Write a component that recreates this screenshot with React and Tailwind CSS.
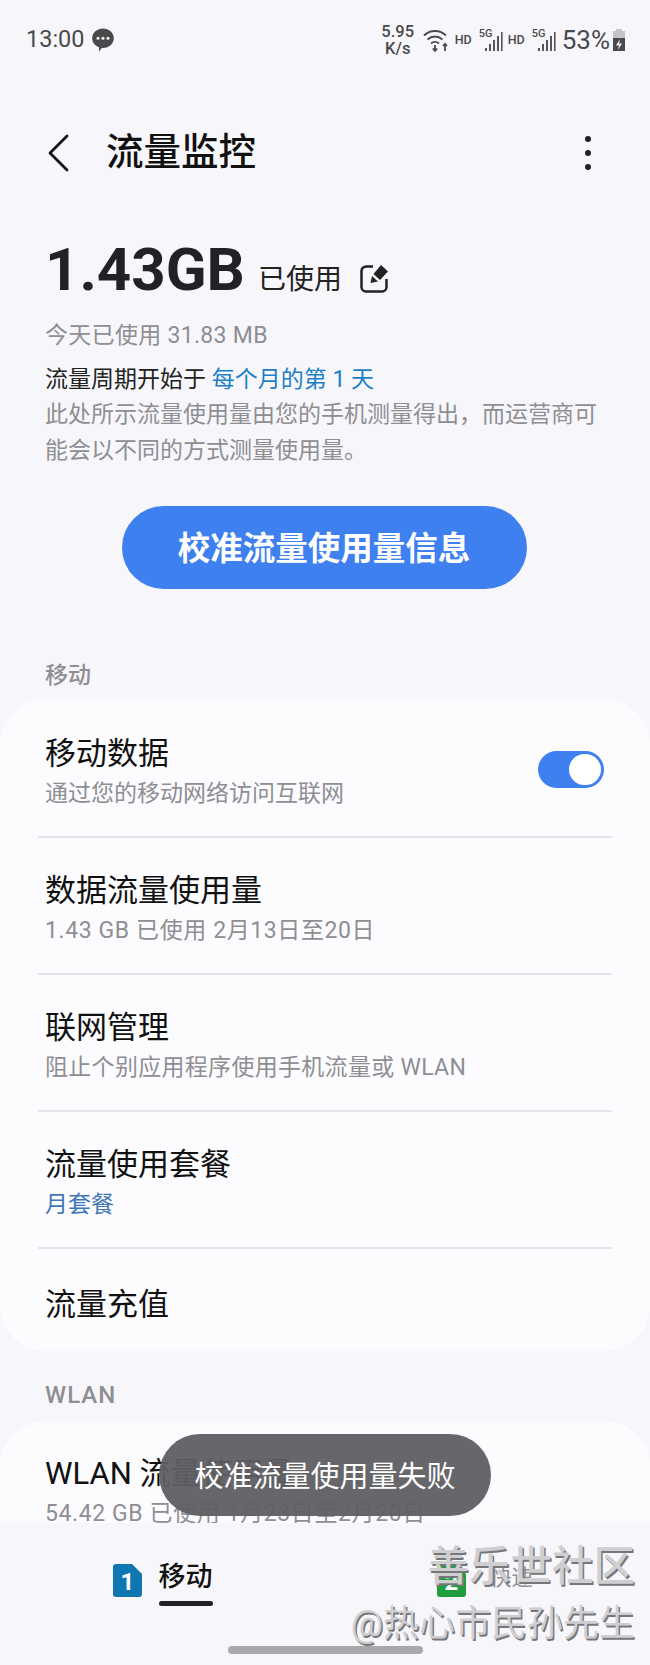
const font = { fontFamily: 'Roboto, "Noto Sans CJK SC", sans-serif' }

function Signal() {
    return (
        <span className="relative w-[23px] h-[24px] block">
            <span className="absolute left-0 top-0 text-[11px] leading-[11px] font-medium text-[#4a4a4c]">5G</span>
            <svg className="absolute left-[6px] top-[4px]" width="18" height="20" viewBox="0 0 18 20" fill="#55555a">
                <rect x="0" y="16" width="2" height="3" />
                <rect x="4" y="12" width="2" height="7" />
                <rect x="8" y="8" width="2" height="11" />
                <rect x="12" y="4" width="2" height="15" />
                <rect x="16" y="0" width="1.6" height="19" />
            </svg>
        </span>
    )
}

function StatusBar() {
    return (
        <div className="flex flex-row items-center justify-between h-[80px] pl-[26px] pr-[24px] text-[#4a4a4c]">
            <div className="flex flex-row items-center gap-[6px]">
                <span className="text-[23.500px] leading-none">13:00</span>
                <svg width="24" height="26" viewBox="0 0 24 26">
                    <path d="M12 1.5c6 0 10.8 4.3 10.8 9.8 0 5.4-4.8 9.7-10.8 9.7-.4 0-.8 0-1.2-.1L8 24.5v-4.2C3.800 18.800 1.200 15.400 1.200 11.300 1.200 5.800 6 1.500 12 1.500z" fill="#4a4a4c" />
                    <circle cx="7" cy="11.300" r="1.500" fill="#f7f7fb" />
                    <circle cx="12" cy="11.300" r="1.500" fill="#f7f7fb" />
                    <circle cx="17" cy="11.300" r="1.500" fill="#f7f7fb" />
                </svg>
            </div>
            <div className="flex flex-row items-center">
                <span className="flex flex-col items-center text-[16.500px] leading-[17px] font-medium w-[36px] mr-[7px]">
                    <span>5.95</span>
                    <span>K/s</span>
                </span>
                <svg width="27" height="26" viewBox="0 0 27 26" fill="none" stroke="#4a4a4c" strokeWidth="1.800" className="mr-[5px]">
                    <path d="M1 8.500C7 2.500 17 2.500 23 8.500" />
                    <path d="M4.500 12.500C9 8.500 15 8.500 19.500 12.500" />
                    <path d="M8 16.500C10.500 14.500 13.500 14.500 16 16.500" />
                    <path d="M12 18v6M9.800 21.500l2.200 2.500 2.200-2.500" />
                    <path d="M22 24v-7M20 19l2-2.200 2 2.200" />
                </svg>
                <span className="text-[12.500px] leading-none font-medium w-[16px] mr-[8px]">HD</span>
                <Signal />
                <span className="text-[12.500px] leading-none font-medium w-[16px] ml-[6px] mr-[8px]">HD</span>
                <Signal />
                <span className="text-[26px] leading-none ml-[7px]">53%</span>
                <svg width="14" height="24" viewBox="0 0 14 24" className="ml-[2px]">
                    <path d="M4 1h6v2h3v20H1V3h3z" fill="#c4c4c6" />
                    <path d="M1 10h12v13H1z" fill="#4a4a4c" />
                    <path d="M8 11l-4 6.500h3L6 22l4-6.500H7z" fill="#f7f7fb" />
                </svg>
            </div>
        </div>
    )
}

function Row({ title, sub, subClass = "text-[#8e8e93]", last = false, children }) {
    return (
        <div className={`mx-[38px] ${last ? "" : "border-b-2 border-[#e4e4e9]"}`}>
            <div className={`px-[7px] flex flex-row items-center justify-between ${sub ? "h-[135px] pt-[6px]" : "h-[112px]"}`}>
                <div className="flex flex-col">
                    <span className="text-[31px] leading-[40px] text-[#111]">{title}</span>
                    {sub ? <span className={`text-[23px] leading-[30px] mt-[5px] ${subClass}`}>{sub}</span> : ""}
                </div>
                {children}
            </div>
        </div>
    )
}

function Sim({ n, color }) {
    return (
        <svg width="29" height="33" viewBox="0 0 29 33" className="mt-[5px]">
            <path d="M3 0h16l10 10v20a3 3 0 0 1-3 3H3a3 3 0 0 1-3-3V3a3 3 0 0 1 3-3z" fill={color} />
            <text x="14.500" y="26" textAnchor="middle" fontSize="24" fontWeight="700" fill="#fff" fontFamily="Roboto, sans-serif">{n}</text>
        </svg>
    )
}

export default function App() {
    return (
        <div style={font} className="relative flex flex-col w-[650px] h-[1665px] overflow-hidden bg-[#f7f7fb]">
            <StatusBar />

            <div className="flex-1 min-h-0 overflow-hidden flex flex-col">
                <div className="flex flex-row items-center justify-between h-[64px] mt-[53px] pl-[46px] pr-[59px]">
                    <div className="flex flex-row items-center">
                        <svg width="26" height="40" viewBox="0 0 26 40" fill="none" stroke="#111" strokeWidth="2.800" strokeLinecap="round" strokeLinejoin="round">
                            <path d="M21 3L4 20l17 17" />
                        </svg>
                        <span className="ml-[34px] text-[37.500px] leading-none font-medium text-[#111]">流量监控</span>
                    </div>
                    <div className="flex flex-col gap-[8px]">
                        <span className="w-[6px] h-[6px] rounded-full bg-[#222]"></span>
                        <span className="w-[6px] h-[6px] rounded-full bg-[#222]"></span>
                        <span className="w-[6px] h-[6px] rounded-full bg-[#222]"></span>
                    </div>
                </div>

                <div className="px-[45px] mt-[62px]">
                    <div className="flex flex-row items-end h-[70px]">
                        <span className="text-[60px] leading-[70px] font-bold text-[#222226]">1.43GB</span>
                        <span className="ml-[13px] mb-[5px] text-[28px] leading-[40px] text-[#222]">已使用</span>
                        <svg className="ml-[18px] mb-[12px]" width="28" height="28" viewBox="0 0 28 28" fill="none">
                            <path d="M13 1.500H6a4.500 4.500 0 0 0-4.500 4.500v16a4.500 4.500 0 0 0 4.500 4.500h16a4.500 4.500 0 0 0 4.500-4.500v-8" stroke="#222" strokeWidth="2.500" />
                            <path d="M21 0l7 6.500-8 8.500-6.500-6z" fill="#222" />
                            <path d="M12 11l6 5.500-7.500 1.500z" fill="#222" />
                        </svg>
                    </div>
                    <p className="mt-[13px] text-[23px] leading-[36px] tracking-[0.3px] text-[#8e8e93]">今天已使用 31.83 MB</p>
                    <p className="mt-[8px] text-[23px] leading-[35px] text-[#222]">
                        流量周期开始于 <span className="text-[#1d7fc7]">每个月的第 1 天</span>
                    </p>
                    <p className="text-[23px] leading-[36px] text-[#8e8e93]">此处所示流量使用量由您的手机测量得出，而运营商可能会以不同的方式测量使用量。</p>
                </div>

                <div className="flex justify-center mt-[37px] pr-[2px]">
                    <div className="flex items-center justify-center w-[405px] h-[83px] pt-[4px] rounded-full bg-[#3f80f1] text-white text-[32.500px] font-bold">校准流量使用量信息</div>
                </div>

                <p className="mt-[72px] px-[45px] text-[23px] leading-[30px] font-medium text-[#8e8e93]">移动</p>

                <div className="mt-[8px] pt-[2px] rounded-[46px] bg-[#fcfcfe] h-[652px] shrink-0">
                    <Row title="移动数据" sub="通过您的移动网络访问互联网">
                        <div className="flex items-center justify-end w-[66px] h-[37px] p-[3px] mr-[1px] mb-[5px] rounded-full bg-[#3f80f1]">
                            <div className="w-[32px] h-[31px] rounded-full bg-white"></div>
                        </div>
                    </Row>
                    <Row title="数据流量使用量" sub="1.43 GB 已使用 2月13日至20日" subClass="text-[#8e8e93] tracking-[0.6px]" />
                    <Row title="联网管理" sub="阻止个别应用程序使用手机流量或 WLAN" subClass="text-[#8e8e93] tracking-[0.3px]" />
                    <Row title="流量使用套餐" sub="月套餐" subClass="text-[#3f78b8]" />
                    <Row title="流量充值" last />
                </div>

                <p className="mt-[29px] px-[45px] text-[24px] leading-[30px] tracking-[1px] font-medium text-[#8e8e93]">WLAN</p>

                <div className="mt-[11px] rounded-t-[46px] bg-[#fcfcfe] flex-1">
                    <Row title="WLAN 流量使用量" sub="54.42 GB 已使用 1月23日至2月20日" subClass="text-[#8e8e93] tracking-[0.6px]" last />
                </div>
            </div>

            <div className="relative h-[142px] shrink-0 bg-[#f7f7fb]">
                <div className="flex flex-row h-[104px]">
                    <div className="flex flex-row items-center justify-center w-1/2 gap-[17px] pt-[5px]">
                        <Sim n="1" color="#0e77b2" />
                        <span className="relative text-[27px] leading-none font-medium text-[#111]">
                            移动
                            <span className="absolute left-0 right-0 top-[37px] h-[5px] rounded-full bg-[#222226]"></span>
                        </span>
                    </div>
                    <div className="flex flex-row items-center justify-center w-1/2 gap-[24px] pr-[5px] pt-[5px]">
                        <Sim n="2" color="#1e9e3e" />
                        <span className="text-[21.500px] leading-none text-[#8e8e93]">快速</span>
                    </div>
                </div>
                <div className="flex justify-center mt-[19px]">
                    <div className="w-[195px] h-[8px] rounded-full bg-[#a8a8aa]"></div>
                </div>
            </div>

            {/* toast over the list, the text behind shows through a little */}
            <div className="absolute left-[159px] top-[1434px] flex items-center justify-center w-[332px] h-[82px] pt-[6px] rounded-full bg-[#5f5f63]/95 text-white text-[29px]">校准流量使用量失败</div>

            {/* watermark */}
            <div className="absolute right-[15px] top-[1541px] flex flex-col items-end text-[#cfcfd2] [text-shadow:1.5px_1.5px_0_#77777a]">
                <span className="text-[41.500px] leading-[52px] font-medium">善乐世社区</span>
                <span className="text-[36px] leading-[50px] mt-[6px]">@热心市民孙先生</span>
            </div>
        </div>
    )
}
